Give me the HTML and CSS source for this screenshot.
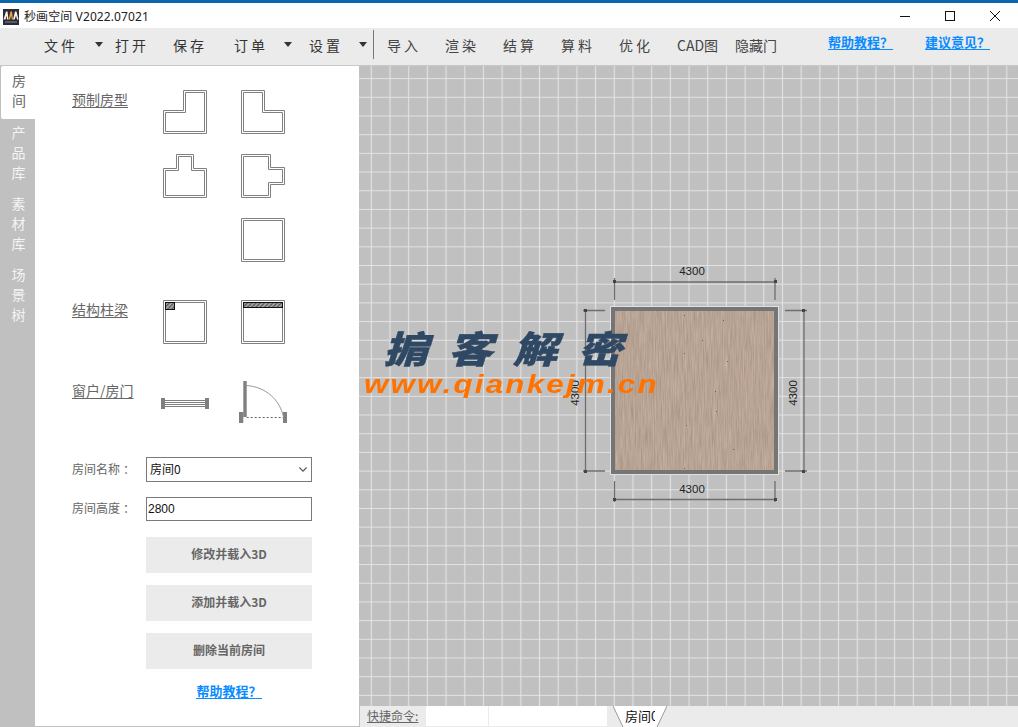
FILE: index.html
```html
<!DOCTYPE html>
<html lang="zh-CN">
<head>
<meta charset="utf-8">
<title>秒画空间</title>
<link rel="stylesheet" href="styles.css">
</head>
<body>
<div class="app">
  <header class="titlebar">
    <svg class="logo" viewBox="0 0 16 16" width="16" height="16">
      <rect width="16" height="16" fill="#2a2a38"/>
      <path d="M.5 10.500 3 2.500h1.500L5.500 10.500H4L3.700 6.500 2.500 10.500Z" fill="#fbf3e2"/>
      <path d="M5.500 10.500 7.500 2.500h1.500l1 8H8.700L8.200 6.500 7 10.500Z" fill="#f2a23a"/>
      <path d="M10 10.500l2-8h1.500l2 8H14l-1-4-1.300 4Z" fill="#fbf3e2"/>
      <rect x="2" y="12.500" width="12" height="1" fill="#8a8a94"/>
    </svg>
    <span class="app-title">秒画空间 V2022.07021</span>
    <div class="winctl">
      <svg width="10" height="10" viewBox="0 0 10 10"><path d="M0 5.500H10" stroke="#111" fill="none"/></svg>
      <svg width="10" height="10" viewBox="0 0 10 10"><rect x=".5" y=".5" width="9" height="9" stroke="#111" fill="none"/></svg>
      <svg width="10" height="10" viewBox="0 0 10 10"><path d="M0 0 10 10M10 0 0 10" stroke="#111" fill="none"/></svg>
    </div>
  </header>

  <nav class="toolbar">
    <span class="tb g1">文件</span><i class="caret c1"></i>
    <span class="tb g2">打开</span>
    <span class="tb g3">保存</span>
    <span class="tb g4">订单</span><i class="caret c2"></i>
    <span class="tb g5">设置</span><i class="caret c2"></i>
    <span class="sep"></span>
    <span class="tb cell">导入</span>
    <span class="tb cell">渲染</span>
    <span class="tb cell">结算</span>
    <span class="tb cell">算料</span>
    <span class="tb cell">优化</span>
    <span class="tb cell tight">CAD图</span>
    <span class="tb cell tight">隐藏门</span>
    <a class="link first">帮助教程<span class="fw">？</span></a>
    <a class="link">建议意见<span class="fw">？</span></a>
  </nav>

  <div class="main">
    <aside class="side">
      <div class="tabs">
        <div class="tab active">房<br>间</div>
        <div class="tab">产<br>品<br>库</div>
        <div class="tab">素<br>材<br>库</div>
        <div class="tab">场<br>景<br>树</div>
      </div>
      <div class="panel">
        <section class="group">
          <h3 class="glabel">预制房型</h3>
          <div class="icons">
            <svg class="ic" viewBox="0 0 44 44"><path d="M20.500 .5H43.500V43.500H.5V20.500H20.500Z"/><path d="M22.500 2.500H41.500V41.500H2.500V22.500H22.500Z"/></svg>
            <svg class="ic" viewBox="0 0 44 44"><path d="M.5 .5H23.500V20.500H43.500V43.500H.5Z"/><path d="M2.500 2.500H21.500V22.500H41.500V41.500H2.500Z"/></svg>
            <svg class="ic" viewBox="0 0 44 44"><path d="M13.500 .5H30.500V14.500H43.500V43.500H.5V14.500H13.500Z"/><path d="M15.500 2.500H28.500V16.500H41.500V41.500H2.500V16.500H15.500Z"/></svg>
            <svg class="ic" viewBox="0 0 44 44"><path d="M.5 .5H29.500V13.500H43.500V30.500H29.500V43.500H.5Z"/><path d="M2.500 2.500H27.500V15.500H41.500V28.500H27.500V41.500H2.500Z"/></svg>
            <span></span>
            <svg class="ic" viewBox="0 0 44 44"><path d="M.5 .5H43.500V43.500H.5Z"/><path d="M2.500 2.500H41.500V41.500H2.500Z"/></svg>
          </div>
        </section>
        <section class="group g-struct">
          <h3 class="glabel">结构柱梁</h3>
          <div class="icons">
            <svg class="ic" viewBox="0 0 44 44">
              <defs><pattern id="hatch" width="3" height="3" patternUnits="userSpaceOnUse" patternTransform="rotate(45)"><rect width="3" height="3" fill="#fff"/><rect width="1.200" height="3" fill="#111"/></pattern></defs>
              <path d="M.5 .5H43.500V43.500H.5Z"/><path d="M2.500 2.500H41.500V41.500H2.500Z"/>
              <rect class="hatch" x="2.500" y="2.500" width="9" height="7"/>
            </svg>
            <svg class="ic" viewBox="0 0 44 44">
              <path d="M.5 .5H43.500V43.500H.5Z"/><path d="M2.500 2.500H41.500V41.500H2.500Z"/>
              <rect class="hatch" x="2.500" y="2.500" width="39" height="5"/>
            </svg>
          </div>
        </section>
        <section class="group g-open">
          <h3 class="glabel">窗户/房门</h3>
          <div class="icons">
            <svg class="ic-wide window" viewBox="0 0 50 13" width="50" height="13">
              <rect x="1" y="0" width="4" height="11" fill="#808080"/>
              <rect x="45" y="0" width="4" height="11" fill="#808080"/>
              <path class="win" d="M5 2.500H45M5 4.500H45M5 6.500H45M5 8.500H45"/>
            </svg>
            <svg class="ic-wide" viewBox="0 0 50 43" width="50" height="43">
              <rect x="5.300" y="0" width="3.400" height="36" fill="#808080"/>
              <rect x="1" y="31" width="4.300" height="11" fill="#808080"/>
              <rect x="45" y="31" width="4" height="11" fill="#808080"/>
              <path d="M8.700 4.500C28 6 42 19 45.500 36" fill="none" stroke="#999" stroke-width="1"/>
              <path d="M8.700 36.500H45" fill="none" stroke="#666" stroke-dasharray="2 2"/>
            </svg>
          </div>
        </section>
        <form class="form">
          <label class="flabel">房间名称<span class="fw">：</span></label>
          <div class="select"><span>房间0</span>
            <svg width="8" height="5" viewBox="0 0 8 5"><path d="M.4 .5 4 4.200 7.600 .5" fill="none" stroke="#555" stroke-width="1.100"/></svg>
          </div>
          <label class="flabel">房间高度<span class="fw">：</span></label>
          <input class="input" type="text" value="2800">
        </form>
        <div class="actions">
          <button class="btn" type="button">修改并载入3D</button>
          <button class="btn" type="button">添加并载入3D</button>
          <button class="btn" type="button">删除当前房间</button>
          <a class="link help">帮助教程<span class="fw">？</span></a>
        </div>
      </div>
    </aside>

    <div class="work">
      <div class="canvas">
        <svg class="plan" viewBox="359 66 659 640" preserveAspectRatio="xMinYMin">
          <defs>
            <pattern id="grid" x="361.955" y="69.255" width="18.690" height="18.690" patternUnits="userSpaceOnUse">
              <path d="M9.345 0V18.690M0 9.345H18.690" stroke="#e2e2e2" stroke-width="1.100" fill="none"/>
            </pattern>
            <filter id="wood" x="0" y="0" width="100%" height="100%" color-interpolation-filters="sRGB">
              <feTurbulence type="fractalNoise" baseFrequency="0.9 0.04" numOctaves="3" seed="7"/>
              <feColorMatrix type="matrix" values=".16 0 0 0 .64  .16 0 0 0 .56  .16 0 0 0 .50  0 0 0 0 1"/>
            </filter>
          </defs>
          <rect x="359" y="66" width="659" height="640" fill="#c0c0c0"/>
          <rect x="359" y="66" width="659" height="640" fill="url(#grid)"/>

          <rect x="610" y="306" width="169" height="169" fill="#e0e0e0"/>
          <rect x="611" y="307" width="167" height="167" fill="#757575"/>
          <rect x="615" y="311" width="159" height="159" fill="#cfc8c0"/>
          <rect x="615.500" y="311.500" width="158" height="158" filter="url(#wood)"/>
          <g fill="#6d5f54">
            <rect x="684" y="315" width="1" height="1"/><rect x="684" y="353" width="1" height="1"/>
            <rect x="702" y="340" width="1" height="1"/><rect x="727" y="361" width="1" height="1"/>
            <rect x="723" y="320" width="1" height="1"/><rect x="715" y="391" width="1" height="1"/>
            <rect x="686" y="425" width="1" height="1"/><rect x="716" y="411" width="1" height="1"/>
            <rect x="733" y="449" width="1" height="1"/><rect x="684" y="468" width="1" height="1"/>
          </g>

          <g class="dim">
            <path d="M614.500 282H775.500M614.500 278V300M775 278V300"/>
            <path d="M614.500 499.500H775.500M614.500 481V502M775 481V502"/>
            <path d="M804 310.500V471M785 310.500H807M785 471H807"/>
            <path d="M585.500 310.500V471M583 310.500H605M583 471H605"/>
          </g>
          <g fill="#444">
            <rect x="613" y="280" width="3" height="3"/><rect x="774" y="280" width="3" height="3"/>
            <rect x="613" y="498" width="3" height="3"/><rect x="774" y="498" width="3" height="3"/>
            <rect x="802" y="309" width="3" height="3"/><rect x="802" y="470" width="3" height="3"/>
            <rect x="584" y="309" width="3" height="3"/><rect x="584" y="470" width="3" height="3"/>
          </g>
          <g class="dimtext">
            <text x="692" y="274.500">4300</text>
            <text x="692" y="492.500">4300</text>
            <text transform="translate(797 393) rotate(-90)">4300</text>
            <text transform="translate(579 393) rotate(-90)">4300</text>
          </g>
        </svg>
        <div class="mark">
          <div class="mark-cn">掮客解密</div>
          <div class="mark-url">www.qiankejm.cn</div>
        </div>
      </div>
      <footer class="cmdbar">
        <span class="cmd-label">快捷命令:</span>
        <span class="cmd-in short"></span>
        <span class="cmd-in long"></span>
        <div class="sheet">
          <svg class="sheet-bg" width="54" height="21" viewBox="0 0 54 21"><path d="M0 0H54L44 21H10Z" fill="#fff"/><path d="M0 0 10 21M54 0 44 21" stroke="#999" fill="none"/></svg>
          <span class="sheet-name">房间0</span>
        </div>
      </footer>
    </div>
  </div>
</div>
</body>
</html>
```

FILE: styles.css
```css
* { box-sizing: border-box; }
html, body { margin: 0; height: 100%; overflow: hidden; }
body { font-family: "Noto Sans CJK SC", "Noto Sans", sans-serif; background: #fff; color: #333; }
.app { width: 1018px; height: 727px; display: flex; flex-direction: column; }
.fw { font-family: "Noto Sans CJK TC", sans-serif; }

.titlebar {
  height: 28px; flex: none; display: flex; align-items: center; padding: 3px 0 0 3px;
  border-top: 3px solid #0b66ad; background: #fff;
}
.logo { flex: none; margin-top: -1px; }
.app-title { margin-left: 5px; margin-top: -1px; font: 12px/16px "Noto Sans", "Noto Sans CJK SC", sans-serif; letter-spacing: .1px; color: #222; }
.winctl { margin-left: auto; display: flex; gap: 35px; padding-right: 18px; margin-top: -3px; }

.toolbar {
  height: 37px; flex: none; background: #ebebeb; display: flex; align-items: center;
  padding: 0 28px 4px 44px;
}
.tb { font-size: 14px; line-height: 20px; letter-spacing: 3px; color: #333; white-space: nowrap; }
.g2 { margin-left: 12px; }
.g3 { margin-left: 24px; }
.g4 { margin-left: 27px; }
.g5 { margin-left: 17px; }
.caret { width: 0; height: 0; border: 4.500px solid transparent; border-top: 5px solid #333; border-bottom: 0; flex: none; }
.c1 { margin-left: 17px; }
.c2 { margin-left: 16px; }
.sep { width: 1px; height: 29px; background: #777; margin: 0 13px 0 6px; flex: none; }
.cell { width: 58px; flex: none; color: #444; }
.tight { letter-spacing: 0; }
.link { font-size: 13px; line-height: 15px; font-weight: 700; color: #0a8cff; border-bottom: 1px solid #0a8cff; white-space: nowrap; }
.toolbar .link { margin-top: -5px; margin-left: 32px; }
.toolbar .link.first { margin-left: auto; }

.main { flex: 1; display: flex; min-height: 0; border-top: 1px solid #c8c8c8; }
.side { width: 359px; flex: none; display: flex; background: #c0c0c0; padding-bottom: 1px; }
.tabs { width: 35px; flex: none; }
.tab { font-size: 14px; line-height: 20px; color: #f4f4f4; text-align: center; padding: 0 0 11px 2px; width: 35px; }
.tab.active { background: #fff; color: #666; height: 53px; padding: 4px 0 0 2px; margin: 0 0 3px 1px; width: 34px; border-radius: 2px 0 0 2px; }

.panel { flex: 1; background: #fff; padding: 24px 0 0 37px; display: flex; flex-direction: column; }
.group { display: flex; }
.glabel { margin: -1px 0 0; width: 91px; flex: none; font-size: 14px; font-weight: 400; line-height: 20px; height: 20px; color: #666; text-decoration: underline; text-underline-offset: 2px; }
.icons { display: grid; grid-template-columns: 44px 44px; column-gap: 34px; row-gap: 20px; align-content: start; }
.ic { width: 44px; height: 44px; display: block; fill: none; stroke: #808080; stroke-width: 1; }
.hatch { fill: url(#hatch); stroke: #111; stroke-width: 1; }
.g-struct { margin-top: 38px; }
.g-open { margin-top: 37px; height: 42px; }
.ic-wide { display: block; margin-left: -3px; }
.window { margin-top: 17px; }
.win { fill: none; stroke: #808080; stroke-width: 1; }

.form { margin-top: 34px; display: grid; grid-template-columns: 74px 166px; row-gap: 15px; align-items: center; }
.flabel { font-size: 12px; color: #666; line-height: 16px; margin-top: -2px; white-space: nowrap; }
.flabel .fw { padding-left: 3px; }
.select { height: 25px; border: 1px solid #7a7a7a; display: flex; align-items: center; justify-content: space-between; padding: 0 3px 2px; font-size: 12px; color: #111; background: #fff; }
.select svg { margin-right: 1px; margin-top: 2px; }
.input { height: 24px; border: 1px solid #7a7a7a; padding: 0 0 0 1px; font: 12px "Liberation Sans", sans-serif; color: #111; width: 100%; background: #fff; outline: 0; }

.actions { margin: 16px 0 0 74px; width: 166px; display: flex; flex-direction: column; align-items: center; gap: 12px; }
.btn { width: 100%; height: 36px; border: 0; padding: 0 0 3px; background: #ebebeb; font: 700 12px "Noto Sans CJK SC", "Liberation Sans", sans-serif; color: #666; }
.help { margin-top: 2px; }

.work { flex: 1; display: flex; flex-direction: column; min-width: 0; }
.canvas { flex: 1; position: relative; min-height: 0; overflow: hidden; background: #c0c0c0; }
.plan { position: absolute; left: 0; top: 0; width: 659px; height: 640px; display: block; }
.dim { fill: none; stroke: #6e6e6e; stroke-width: 1.300; }
.dimtext { font: 11.500px "Liberation Sans", sans-serif; fill: #222; text-anchor: middle; }
.mark { position: absolute; left: 5px; top: 258px; width: 300px; transform: scaleX(1.2); transform-origin: 0 0; }
.mark-cn { font-size: 37px; line-height: 46px; font-weight: 900; font-style: italic; color: #2f4864; letter-spacing: 17px; white-space: nowrap; padding-left: 16px; -webkit-text-stroke: .4px #2f4864; }
.mark-url { font: italic 700 26px/28px "Liberation Sans", sans-serif; letter-spacing: 1.900px; color: #ff7200; white-space: nowrap; }

.cmdbar { height: 21px; flex: none; background: #ebebeb; display: flex; align-items: stretch; padding-left: 7px; border-left: 1px solid #c0c0c0; }
.cmd-label { font-size: 12px; line-height: 20px; width: 59px; flex: none; color: #666; text-decoration: underline; white-space: nowrap; }
.cmd-in { background: #fff; margin-bottom: 1px; flex: none; }
.short { width: 62px; margin-right: 1px; }
.long { width: 118px; }
.sheet { position: relative; width: 54px; flex: none; margin-left: 6px; }
.sheet-bg { position: absolute; left: 0; top: 0; }
.sheet-name { position: absolute; left: 12px; top: 0; width: 30px; overflow: hidden; white-space: nowrap; font-size: 13px; line-height: 20px; color: #111; }
```
